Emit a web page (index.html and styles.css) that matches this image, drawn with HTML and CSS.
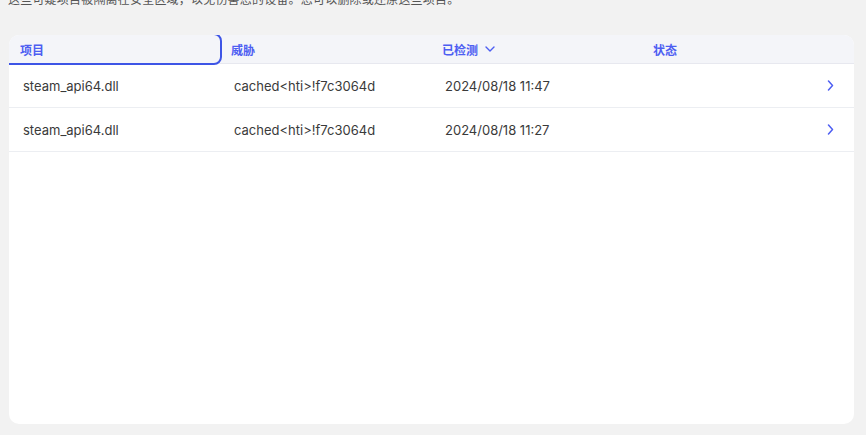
FILE: index.html
```html
<!DOCTYPE html>
<html lang="zh-CN">
<head>
  <meta charset="UTF-8">
  <meta name="viewport" content="width=device-width, initial-scale=1.0">
  <title>隔离区</title>
  <link rel="stylesheet" href="styles.css">
</head>
<body>
  <div class="page">
    <p class="desc">这些可疑项目被隔离在安全区域，以免伤害您的设备。您可以删除或还原这些项目。</p>

    <div class="card">
      <div class="table">
        <div class="thead">
          <div class="th focused">项目</div>
          <div class="th">威胁</div>
          <div class="th sortable">已检测
            <svg class="sort-icon" width="10" height="6" viewBox="0 0 10 6"><path d="M1 1l4 4 4-4" fill="none" stroke="currentColor" stroke-width="1.4" stroke-linecap="round" stroke-linejoin="round"/></svg>
          </div>
          <div class="th">状态</div>
        </div>

        <div class="tr">
          <div class="td">steam_api64.dll</div>
          <div class="td">cached&lt;hti&gt;!f7c3064d</div>
          <div class="td">2024/08/18 11:47</div>
          <div class="td status">
            <svg class="chevron" width="7" height="11" viewBox="0 0 7 11"><path d="M1.5 1l4 4.5-4 4.5" fill="none" stroke="currentColor" stroke-width="1.5" stroke-linecap="round" stroke-linejoin="round"/></svg>
          </div>
        </div>

        <div class="tr">
          <div class="td">steam_api64.dll</div>
          <div class="td">cached&lt;hti&gt;!f7c3064d</div>
          <div class="td">2024/08/18 11:27</div>
          <div class="td status">
            <svg class="chevron" width="7" height="11" viewBox="0 0 7 11"><path d="M1.5 1l4 4.5-4 4.5" fill="none" stroke="currentColor" stroke-width="1.5" stroke-linecap="round" stroke-linejoin="round"/></svg>
          </div>
        </div>
      </div>
    </div>
  </div>
</body>
</html>
```

FILE: styles.css
```css
*{
  box-sizing: border-box;
}

body{
  margin: 0;
  background: #f2f2f2;
  font-family: Inter, "Noto Sans", "Noto Sans CJK SC", sans-serif;
  overflow: hidden;
}

.page{
  padding: 0 12px 11px 8px;
}

.desc{
  margin: -11px 0 0;
  font-size: 12px;
  letter-spacing: 0.2px;
  line-height: 20px;
  color: #555;
  font-family: "Noto Sans CJK SC", sans-serif;
}

.card{
  margin: 26px 0 0 1px;
  height: 389px;
  background: #fff;
  border-radius: 10px;
  overflow: hidden;
}

.thead,
.tr{
  display: grid;
  grid-template-columns: 211px 211px 211px 1fr;
  align-items: center;
}

.thead{
  height: 29px;
  background: #f4f5f9;
  border-bottom: 1px solid #e7e8ef;
}

.th{
  position: relative;
  display: flex;
  align-items: center;
  height: 100%;
  padding-left: 11px;
  font-family: "Noto Sans CJK SC", sans-serif;
  font-size: 12px;
  font-weight: bold;
  color: #4d5ef2;
}

.th.focused{
  outline: 2px solid #3e55e6;
  border-radius: 0 6px 6px 0;
}

.sort-icon{
  margin-left: 7px;
  color: #4d5ef2;
}

.tr{
  height: 44px;
  border-bottom: 1px solid #eceef2;
}

.td{
  padding-left: 14px;
  font-size: 13px;
  color: #3a3a3a;
}

.td.status{
  display: flex;
  justify-content: flex-end;
  padding-right: 20px;
}

.chevron{
  color: #4d5ef2;
}
```
